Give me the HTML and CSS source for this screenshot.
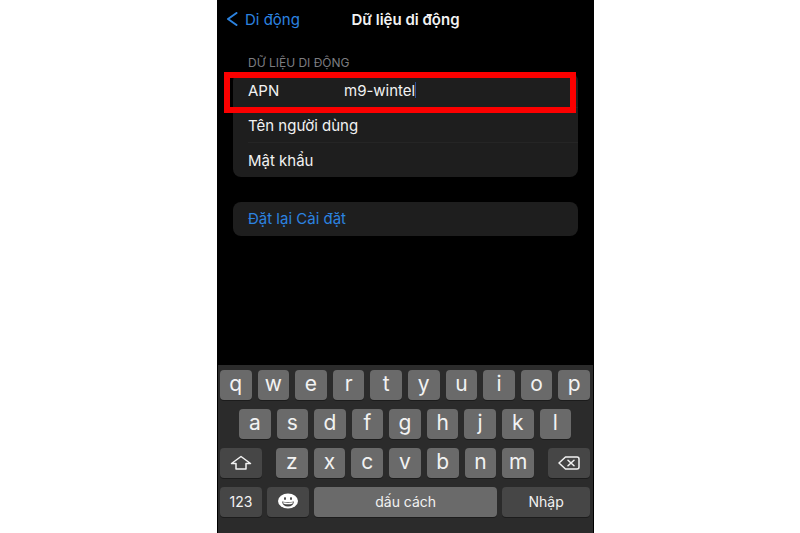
FILE: index.html
```html
<!DOCTYPE html>
<html lang="vi">
<head>
  <meta charset="UTF-8" />
  <meta name="viewport" content="width=device-width, initial-scale=1.0"/>
  <title>Dữ liệu di động</title>
  <link rel="stylesheet" href="styles.css">
</head>
<body>
  <div class="phone">
    <header class="navbar">
      <a class="back" href="#">
        <svg width="12" height="14" viewBox="0 0 12 14" aria-hidden="true"><path d="M10.500 1 2 7l8.500 6" fill="none" stroke="currentColor" stroke-width="2" stroke-linecap="round" stroke-linejoin="round"/></svg>
        Di động
      </a>
      <h1>Dữ liệu di động</h1>
    </header>

    <main class="settings">
      <h2 class="section-title">DỮ LIỆU DI ĐỘNG</h2>
      <form class="group">
        <div class="field highlight">
          <label for="apn">APN</label>
          <span class="value">
            <input type="text" id="apn" name="apn" value="m9-wintel" size="9" />
            <span class="caret"></span>
          </span>
        </div>
        <div class="field">
          <label for="username">Tên người dùng</label>
          <input type="text" id="username" name="username" />
        </div>
        <div class="field">
          <label for="password">Mật khẩu</label>
          <input type="password" id="password" name="password" />
        </div>
      </form>
      <button type="button" class="group reset">Đặt lại Cài đặt</button>
    </main>

    <!-- Keyboard -->
    <div class="keyboard">
      <div class="keys">
        <button type="button">q</button>
        <button type="button">w</button>
        <button type="button">e</button>
        <button type="button">r</button>
        <button type="button">t</button>
        <button type="button">y</button>
        <button type="button">u</button>
        <button type="button">i</button>
        <button type="button">o</button>
        <button type="button">p</button>
      </div>
      <div class="keys keys-middle">
        <button type="button">a</button>
        <button type="button">s</button>
        <button type="button">d</button>
        <button type="button">f</button>
        <button type="button">g</button>
        <button type="button">h</button>
        <button type="button">j</button>
        <button type="button">k</button>
        <button type="button">l</button>
      </div>
      <div class="keys keys-lower">
        <button type="button" class="dark side" aria-label="Shift">
          <svg width="22" height="16" viewBox="0 0 22 16" aria-hidden="true"><path d="M11 1.500 1.500 8.500H6V14h10V8.500h4.500z" fill="none" stroke="currentColor" stroke-width="1.500" stroke-linejoin="round"/></svg>
        </button>
        <div class="keys letters">
          <button type="button">z</button>
          <button type="button">x</button>
          <button type="button">c</button>
          <button type="button">v</button>
          <button type="button">b</button>
          <button type="button">n</button>
          <button type="button">m</button>
        </div>
        <button type="button" class="dark side" aria-label="Xóa">
          <svg width="22" height="14" viewBox="0 0 22 14" aria-hidden="true"><path d="M7.500 1H19q2 0 2 2v8q0 2-2 2H7.500L1 7zM10 4.200l6 5.600m0-5.600-6 5.600" fill="none" stroke="currentColor" stroke-width="1.500" stroke-linejoin="round" stroke-linecap="round"/></svg>
        </button>
      </div>
      <div class="keys keys-bottom">
        <button type="button" class="dark side">123</button>
        <button type="button" class="dark side" aria-label="Biểu tượng cảm xúc">
          <svg width="20" height="16" viewBox="0 0 20 16" aria-hidden="true">
            <ellipse cx="10" cy="8" rx="10" ry="7.500" fill="#fff"/>
            <ellipse cx="7" cy="5.500" rx="1" ry="1.500" fill="#444"/>
            <ellipse cx="13" cy="5.500" rx="1" ry="1.500" fill="#444"/>
            <path d="M4 8.500q6 1 12 0-.8 5-6 5t-6-5z" fill="#444"/>
            <path d="M5 9.300q5 .8 10 0l-.6 1.500q-4.400 1-8.800 0z" fill="#fff"/>
          </svg>
        </button>
        <button type="button" class="space">dấu cách</button>
        <button type="button" class="dark enter">Nhập</button>
      </div>
    </div>
  </div>
</body>
</html>
```

FILE: styles.css
```css
* {
  box-sizing: border-box;
}
body {
  margin: 0;
  min-height: 100vh;
  display: grid;
  grid-template-columns: 217fr minmax(0, 377fr) 206fr;
  background: #fff;
  font-family: Inter, "Noto Sans", sans-serif;
  font-size: 15px;
}
button, input {
  font: inherit;
  color: inherit;
  border: none;
  padding: 0;
  margin: 0;
}
.phone {
  grid-column: 2;
  display: flex;
  flex-direction: column;
  background: #000;
  border: solid #000;
  border-width: 0 1px;
  color: #f2f2f2;
}
.navbar {
  display: grid;
  grid-template-columns: 1fr auto 1fr;
  align-items: center;
  height: 38px;
  padding: 0 8px;
}
.navbar h1 {
  margin: 0;
  font-size: 15px;
  font-weight: 600;
}
.back {
  display: flex;
  align-items: center;
  gap: 7px;
  color: #2c83e0;
  text-decoration: none;
}
.settings {
  padding: 17px 15px;
}
.section-title {
  margin: 0;
  padding-left: 15px;
  font-size: 12px;
  line-height: 16px;
  font-weight: 400;
  color: #7c7c80;
}
.group {
  display: block;
  width: 100%;
  margin-top: 2px;
  background: #1e1e1e;
  border-radius: 8px;
}
.field {
  position: relative;
  display: flex;
  align-items: center;
  height: 34px;
  margin-left: 15px;
}
.field + .field {
  border-top: 1px solid #252525;
  height: 35px;
}
.field label {
  flex: none;
  min-width: 96px;
}
.field input {
  min-width: 0;
  background: none;
  outline: none;
}
.value {
  display: flex;
  align-items: center;
}
.value input {
  field-sizing: content;
}
.caret {
  width: 1px;
  height: 16px;
  background: #2a4f9a;
}
/* red frame around the APN row */
.highlight::after {
  content: "";
  position: absolute;
  z-index: 1;
  inset: -1px 2px -6px -24px;
  border: 6px solid #fb0000;
  pointer-events: none;
}
.reset {
  height: 34px;
  margin-top: 25px;
  padding: 0 15px 2px;
  color: #2c83e0;
  text-align: left;
}
.keyboard {
  display: flex;
  flex-direction: column;
  gap: 9px;
  margin-top: auto;
  padding: 5px 3px 16px 2px;
  background: #2b2b2b;
}
.keys {
  display: flex;
  gap: 6px;
}
.keys button {
  display: flex;
  flex: 1;
  align-items: center;
  justify-content: center;
  min-width: 0;
  height: 30px;
  padding-bottom: 3px;
  background: #6a6a6a;
  border-radius: 4px;
  box-shadow: 0 1px 0 #1c1c1c;
  font-size: 21px;
}
.keys .dark {
  padding-bottom: 0;
  background: #464646;
}
.keys .side {
  flex: 0 0 42px;
}
.keys-middle {
  padding: 0 19px;
}
.keys-lower {
  gap: 14px;
}
.letters {
  flex: 1;
}
.keys-bottom {
  gap: 5px;
}
.keys-bottom button,
.keys-bottom .dark {
  padding-bottom: 2px;
  font-size: 14px;
}
.keys-bottom .space {
  flex: 184;
}
.keys-bottom .enter {
  flex: 88;
}
```
